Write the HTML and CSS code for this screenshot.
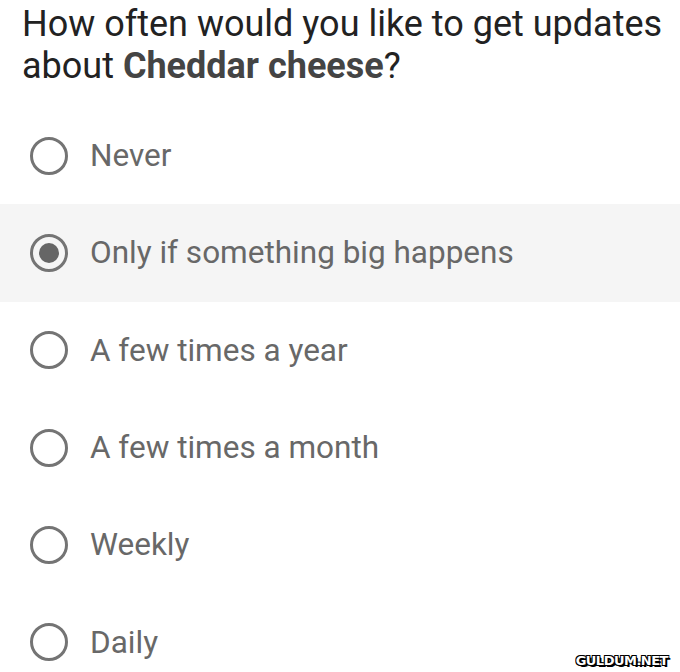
FILE: index.html
```html
<!DOCTYPE html>
<html lang="en">
<head>
    <meta charset="UTF-8">
    <meta name="viewport" content="width=device-width, initial-scale=1.0">
    <title>Topic updates</title>
    <link rel="stylesheet" href="styles.css">
</head>
<body>

    <div id="survey">
        <h1 class="question">How often would you like to get updates about <b>Cheddar cheese</b>?</h1>

        <div class="options">
            <label class="option">
                <input type="radio" name="freq" value="never">
                <span class="radio"></span>
                <span class="label">Never</span>
            </label>
            <label class="option selected">
                <input type="radio" name="freq" value="big" checked>
                <span class="radio"></span>
                <span class="label">Only if something big happens</span>
            </label>
            <label class="option">
                <input type="radio" name="freq" value="year">
                <span class="radio"></span>
                <span class="label">A few times a year</span>
            </label>
            <label class="option">
                <input type="radio" name="freq" value="month">
                <span class="radio"></span>
                <span class="label">A few times a month</span>
            </label>
            <label class="option">
                <input type="radio" name="freq" value="weekly">
                <span class="radio"></span>
                <span class="label">Weekly</span>
            </label>
            <label class="option">
                <input type="radio" name="freq" value="daily">
                <span class="radio"></span>
                <span class="label">Daily</span>
            </label>
        </div>

        <div class="watermark">GULDUM.NET</div>
    </div>

    <script>
        document.querySelectorAll('.option input').forEach(input => {
            input.addEventListener('change', function () {
                document.querySelectorAll('.option').forEach(opt => opt.classList.remove('selected'));
                input.closest('.option').classList.add('selected');
            });
        });
    </script>

</body>
</html>
```

FILE: styles.css
```css
body {
    margin: 0;
    background-color: #fff;
    font-family: 'Roboto', 'Liberation Sans', sans-serif;
}

#survey {
    position: relative;
    height: 672px;
    overflow: hidden;
}

.question {
    margin: 0;
    padding: 3px 6px 0 22px;
    font-size: 36px;
    font-weight: 400;
    line-height: 42px;
    color: #222;
}

.question b {
    font-weight: 700;
    color: #444;
}

.options {
    margin-top: 20px;
}

.option {
    display: flex;
    align-items: center;
    height: 97.3px;
    padding-left: 30px;
    cursor: pointer;
}

.option.selected {
    background-color: #f5f5f5;
}

.option input {
    display: none;
}

.radio {
    box-sizing: border-box;
    width: 38px;
    height: 38px;
    border: 3.5px solid #747474;
    border-radius: 50%;
    display: flex;
    align-items: center;
    justify-content: center;
}

.option.selected .radio::after {
    content: '';
    width: 20px;
    height: 20px;
    border-radius: 50%;
    background-color: #666;
}

.label {
    margin-left: 22px;
    font-size: 31.5px;
    color: #686868;
}

.watermark {
    position: absolute;
    right: 12px;
    bottom: 4px;
    font-family: 'DejaVu Sans', sans-serif;
    font-size: 13px;
    font-weight: 700;
    color: #fff;
    letter-spacing: -0.5px;
    text-shadow: 1px 1px 0 #000, -1px -1px 0 #000, 1px -1px 0 #000, -1px 1px 0 #000, 2px 2px 0 #000;
}
```
